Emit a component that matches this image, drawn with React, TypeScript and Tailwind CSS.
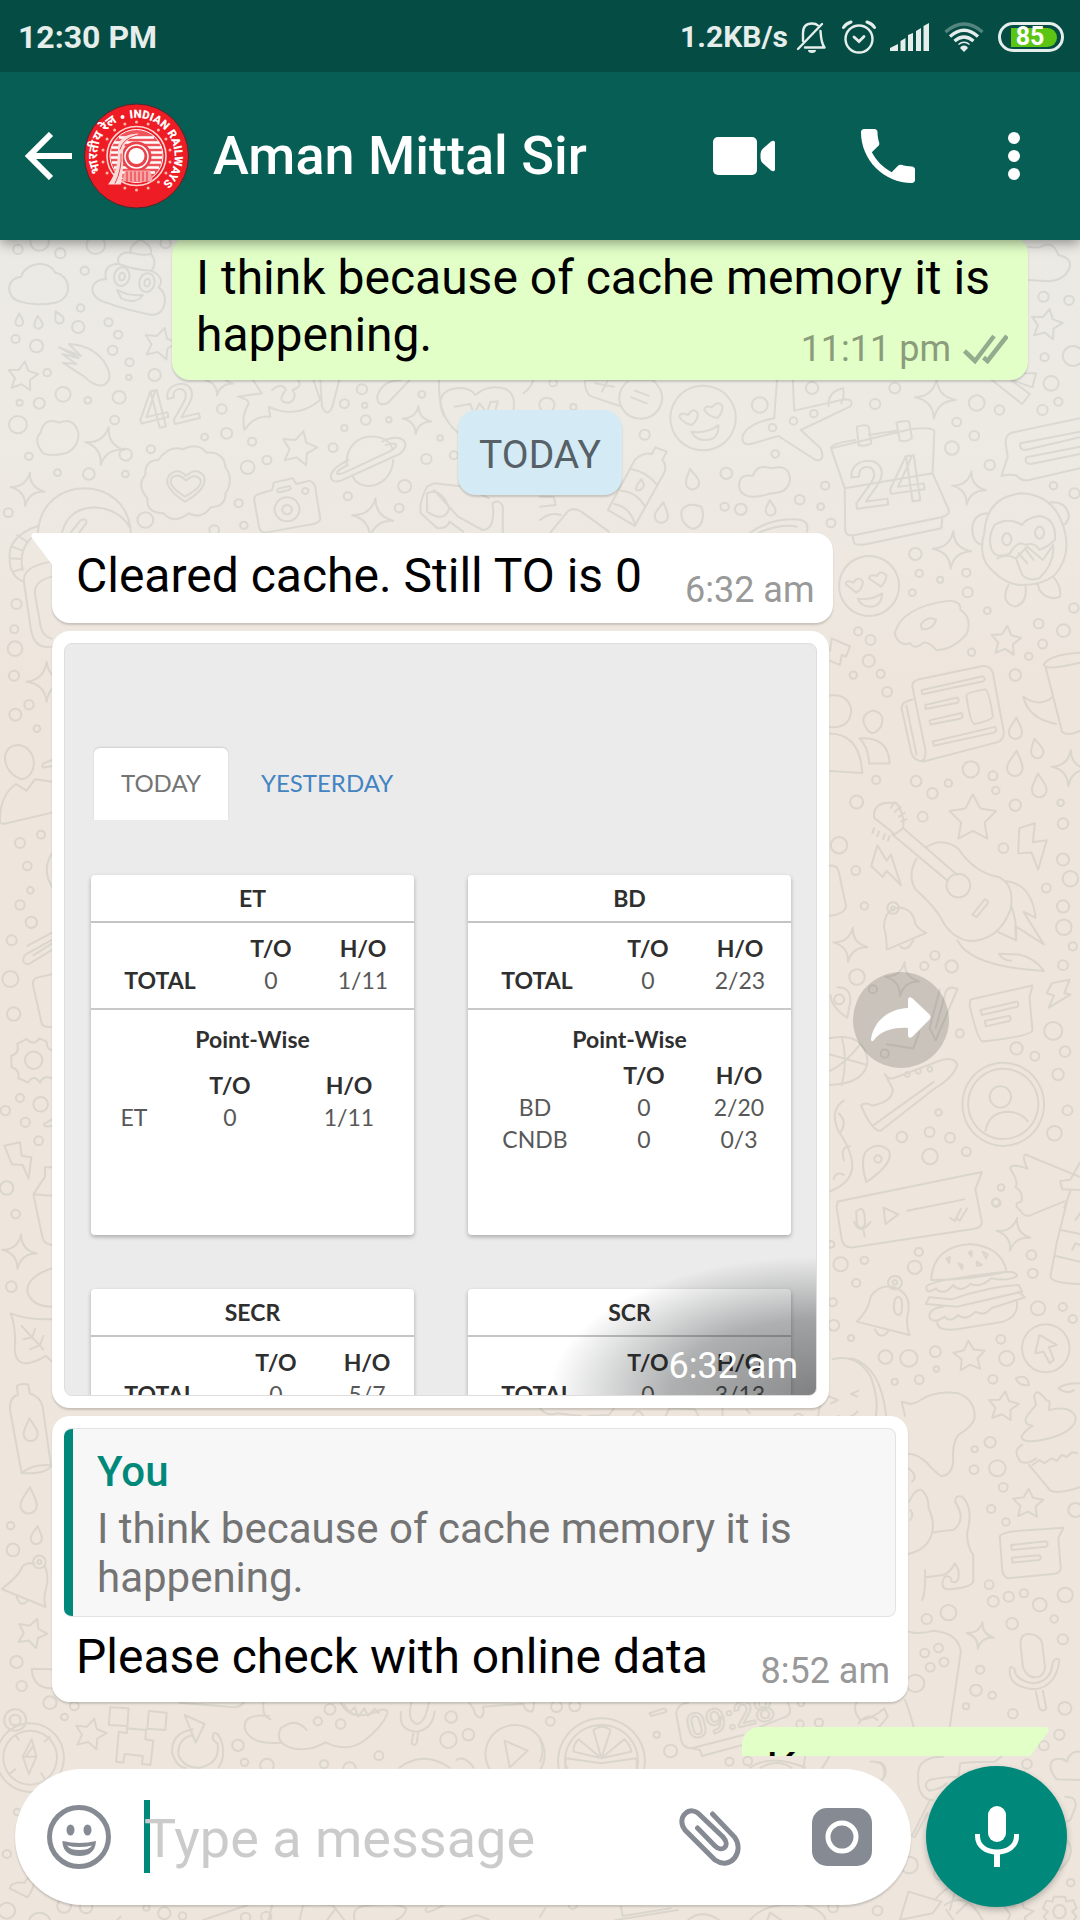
import React from "react";

/* ---------- Wallpaper ---------- */

type Panel = {
  t: string;
  dots: number[][];
  stars?: number[][];
  sparks?: number[][];
  drops?: number[][];
  paths?: string[];
  labels?: [string, number, number, number, number][];
};

const STAR = "M0-1 L.3-.42 .95-.31 .48.15 .59.81 0 .5 -.59.81 -.48.15 -.95-.31 -.3-.42Z";
const SPARK = "M0-1 Q.1-.12 1 0 Q.12.1 0 1 Q-.1.12 -1 0 Q-.12-.1 0-1Z";
const DROP = "M0-1 C.25-.45 .6-.1 .6.35 A.6.6 0 0 1-.6.35 C-.6-.1-.25-.45 0-1Z";

const panels: Panel[] = [
  {
    t: "translate(0 230) scale(.3444 .3333)",
    dots: [[52, 58, 14], [115, 35, 27], [175, 70, 15], [278, 45, 27], [246, 122, 12], [234, 234, 11], [315, 277, 12], [227, 291, 18], [343, 314, 12], [45, 327, 12], [106, 348, 19], [327, 361, 14], [376, 397, 12], [374, 442, 8], [137, 428, 11], [449, 435, 18], [183, 493, 22], [346, 502, 19], [57, 518, 9], [114, 520, 16], [255, 511, 10], [52, 584, 26], [333, 570, 13], [644, 537, 14], [594, 621, 10], [658, 610, 16], [438, 658, 12], [365, 674, 18], [84, 679, 11], [732, 635, 12], [167, 728, 10], [258, 732, 17], [364, 732, 10], [719, 712, 20], [775, 690, 13], [24, 848, 13], [422, 870, 23], [693, 820, 12], [708, 886, 11], [967, 653, 13], [1062, 570, 14], [1000, 521, 13], [1059, 526, 8], [1051, 478, 15], [1129, 569, 8], [1000, 594, 9], [1225, 493, 10], [1278, 624, 8], [1238, 687, 15], [1318, 676, 12], [1175, 769, 19], [1010, 799, 12], [1159, 834, 13], [48, 1122, 15], [481, 40, 15], [622, 900, 14]],
    stars: [[465, 342, 50, 15], [66, 440, 46, 8], [868, 656, 54, 14]],
    sparks: [[304, 648, 58, 12], [80, 778, 50, 8], [1211, 570, 42, 6], [1082, 864, 60, 8], [636, 455, 42, 8]],
    drops: [[56, 270, 19, 0], [111, 277, 20, -5], [170, 262, 20, -25]],
    labels: [["42", 412, 606, 158, -14]],
    paths: [
      "M60 215 C15 205 15 145 62 140 C70 100 140 85 160 128 C205 135 215 205 160 218 C125 226 85 224 60 215Z",
      "M300 215 C250 195 265 145 308 148 C300 115 320 100 345 102 C335 75 360 65 380 68 C375 45 395 40 405 28 C440 45 440 60 438 72 C455 90 448 110 440 122 C475 140 470 160 460 172 C490 190 485 255 440 255 C390 245 340 230 300 215Z",
      "M340 180 Q375 200 415 195 Q395 225 352 205Z M380 68 Q410 78 438 72 M345 102 Q390 120 440 122 M355 112 a22 28 10 1 0 1 0Z M428 130 a22 28 10 1 0 1 0Z M355 128 a8 12 10 1 0 1 0Z M428 146 a8 12 10 1 0 1 0Z",
      "M172 352 L235 378 L200 342 Q265 345 300 392 Q335 445 302 465 Q275 472 245 440 L182 398 L222 402 L180 372 L228 384Z",
      "M125 670 Q95 630 118 608 Q128 560 172 578 Q215 560 228 610 Q228 655 190 670 Q150 680 125 670Z",
      "M460 690 Q490 645 530 658 Q575 635 600 668 Q650 665 655 712 Q680 750 655 790 Q655 830 612 832 Q585 870 548 850 Q505 885 475 850 Q425 850 428 805 Q395 765 422 735 Q420 690 460 690Z",
      "M537 815 Q470 770 490 738 Q515 710 540 738 Q570 710 592 738 Q605 775 537 815Z M537 800 Q482 765 500 742 Q520 728 540 752 Q565 728 582 748 Q590 770 537 800Z",
      "M1007 705 C1000 600 1130 600 1140 660 M1142 690 C1135 780 1040 785 1025 740 M1012 690 C940 725 955 765 990 752 L1160 672 C1200 640 1165 605 1110 635 M1010 705 C970 725 970 740 1000 728 L1130 665 C1165 645 1150 635 1120 645",
      "M752 792 L790 780 L795 758 L850 745 L860 762 L900 752 Q918 760 918 790 L930 865 Q930 880 900 884 L770 908 Q755 908 752 890 L738 810 Q738 795 752 792Z M833 802 a36 36 0 1 0 1 0Z M833 825 a14 14 0 1 0 1 0Z M808 776 L840 768 Q850 775 838 780 L812 787 Q800 785 808 776Z M886 774 a9 9 0 1 0 1 0Z",
      "M110 908 C120 730 370 730 380 908 M180 908 C205 800 340 820 375 890 M205 908 L235 870 Q255 865 250 880 L230 908",
      "M110 888 Q20 920 28 990 Q30 1040 68 1055 M90 925 Q55 960 65 1020 M50 915 l30 22 M35 950 l30 12 M30 985 l32 2 M40 1025 l28 -10 M150 995 Q60 1010 70 1060 L90 1200 Q100 1258 150 1250 M150 1040 Q95 1055 102 1095 L118 1190 Q125 1220 150 1226",
      "M690 500 L760 490 L735 450 M690 500 Q730 510 720 525 Q700 560 710 600 Q740 555 785 560 L780 530 Q860 570 930 510 L910 450 M790 480 Q820 455 830 480 Q800 520 840 518 Q865 505 850 480 Q880 470 865 450 M930 450 L935 530 Q950 565 965 530 L985 450",
      "M1275 450 Q1270 560 1330 608 M1290 560 Q1260 495 1310 478 Q1360 465 1380 495 Q1420 460 1470 478 Q1500 495 1490 545 M1320 530 l45 -8 l12 30 l15 -32 l22 28 l10 -32 l22 -2 l-10 35 M1520 490 Q1545 470 1548 450 M1165 450 Q1110 450 1095 500 Q1095 530 1125 520 L1190 450",
      "M1240 770 L1260 760 L1350 770 L1420 805 M1240 770 Q1215 820 1222 850 L1270 895 Q1300 895 1305 875 L1345 905 M1240 790 Q1280 770 1305 835 Q1290 880 1240 845Z M1260 780 L1330 860 L1400 900 Q1440 900 1430 820 Q1450 805 1460 830 L1460 908",
    ],
  },
  {
    t: "translate(540 230) scale(.3444 .3333)",
    dots: [[1462, 200, 15], [1536, 211, 14], [1465, 382, 12], [1548, 378, 30], [1484, 460, 22], [1505, 515, 12], [1459, 540, 15], [1334, 540, 14], [1268, 519, 23], [1030, 474, 16], [973, 522, 15], [638, 525, 23], [790, 474, 18], [795, 551, 11], [736, 573, 11], [675, 593, 11], [304, 614, 15], [541, 730, 17], [683, 672, 11], [754, 809, 14], [828, 767, 12], [583, 838, 17], [536, 830, 12], [815, 830, 10], [845, 879, 13], [1210, 576, 13], [1261, 617, 14], [1196, 654, 20], [1306, 705, 15], [1491, 767, 11], [1552, 790, 15], [1090, 972, 18], [1101, 1030, 11], [1162, 1049, 9], [1238, 1028, 12], [1081, 1088, 10], [1242, 1087, 15], [1299, 1142, 10], [1550, 1134, 14], [1448, 1181, 14], [1520, 1202, 19], [38, 458, 11], [97, 531, 9], [20, 525, 22]],
    stars: [[1470, 284, 48, 12]],
    sparks: [[1148, 506, 60, 4], [1246, 774, 50, 8], [1196, 960, 56, 4]],
    drops: [[441, 748, 32, -10], [354, 848, 32, 8], [669, 834, 24, -5]],
    labels: [["24", 910, 838, 192, -8]],
    paths: [
      "M1418 50 Q1450 55 1455 50 Q1490 30 1505 75 Q1550 85 1535 120 Q1520 150 1480 154 L1418 150",
      "M1312 450 L1400 522 L1422 492 L1370 452 M1370 450 L1430 472 L1440 430 L1400 430",
      "M473 467 a95 97 0 1 0 1 0Z M405 560 Q405 545 430 555 Q445 530 458 550 Q460 570 440 585 Q415 580 405 560Z M477 540 Q480 525 500 532 Q515 510 530 528 Q530 550 515 564 Q490 560 477 540Z M440 605 Q485 612 518 586 Q520 630 480 630 Q450 630 440 605Z",
      "M955 978 a87 90 0 1 0 1 0Z M888 1063 Q888 1048 910 1058 Q925 1035 938 1055 Q935 1080 918 1088Z M955 1045 Q958 1032 978 1038 Q990 1018 1006 1036 Q1005 1055 990 1070Z M923 1106 Q960 1112 994 1090 Q990 1130 960 1130 Q932 1130 923 1106Z",
      "M688 450 L680 565 Q600 580 588 620 Q585 650 620 640 L692 618 L800 690 Q830 695 815 655 L757 600 L900 530 Q915 510 885 508 L738 542 L734 450 M838 528 Q835 485 880 475 Q885 500 875 520",
      "M335 450 L130 450 Q130 490 150 500 L232 528 M292 442 a62 62 0 1 0 1 0Z M275 482 l40 15 M265 502 l45 18 M160 460 l55 10 M180 485 l20 -40",
      "M335 652 L368 665 L355 690 Q370 705 360 730 L275 888 L197 840 L275 690 Q300 665 325 672Z M265 718 Q310 725 340 765 M235 782 Q280 785 305 830 M215 822 Q260 830 275 880 M295 748 Q275 770 280 780 Q295 785 302 765Z",
      "M412 840 Q430 815 468 830 Q480 860 465 885 Q445 905 430 890 Q405 870 412 840Z",
      "M580 780 Q570 730 618 738 Q630 700 672 715 Q725 700 726 750 Q720 790 670 790 Q600 815 580 780Z",
      "M845 655 Q845 640 915 630 M955 615 L1035 602 M1078 597 Q1145 590 1145 605 L1140 730 L1187 840 Q1190 855 1165 862 L915 915 Q888 920 886 900 L885 775 Q860 700 845 655Z M885 775 L1140 730 M908 920 L912 940 Q920 948 950 942 L1165 895 L1168 868 M920 590 Q950 580 955 592 L962 640 Q940 652 925 645Z M1035 578 Q1060 570 1072 575 L1080 625 Q1065 638 1045 632Z",
      "M1568 565 L1370 608 Q1350 615 1352 640 L1358 680 L1340 738 Q1370 730 1385 738 Q1400 755 1420 750 L1568 715 M1568 605 L1395 640 Q1390 660 1410 660 L1568 622 M1568 650 L1412 682 Q1405 702 1425 702 L1568 672",
      "M1398 790 Q1295 800 1290 910 Q1275 960 1295 1000 Q1345 1065 1400 1065 Q1460 1065 1495 1035 Q1540 980 1525 910 Q1500 795 1398 790Z M1305 850 Q1255 850 1255 900 Q1258 940 1285 945 M1475 818 Q1530 810 1536 860 Q1530 880 1520 885 M1400 885 Q1360 860 1320 885 Q1300 920 1310 955 Q1320 990 1365 970 Q1385 930 1410 945 Q1435 935 1450 960 Q1475 950 1495 930 Q1500 865 1450 858 Q1410 865 1400 885Z M1355 910 a13 18 0 1 0 1 0Z M1450 890 a13 18 0 1 0 1 0Z M1328 985 Q1355 970 1382 985 M1382 985 L1415 950 L1460 990 L1490 945 Q1495 1000 1450 1045 Q1420 1055 1400 1035 L1382 985 M1408 955 l25 35 M1390 970 l25 30 M1360 1065 Q1335 1120 1380 1130 Q1415 1120 1410 1070 M1490 1040 Q1515 1070 1510 1100 Q1475 1115 1450 1080 L1445 1060",
      "M610 908 Q660 870 730 868 Q785 865 775 905 M635 908 Q700 880 745 890",
      "M1030 1210 Q1050 1130 1190 1112 Q1225 1115 1220 1140 Q1255 1160 1240 1210 Q1200 1260 1150 1260 Q1120 1225 1105 1245 Q1085 1258 1075 1240 Q1040 1250 1030 1210Z M1105 1185 Q1125 1155 1150 1170 Q1140 1200 1110 1198Z",
      "M0 800 L40 800 L45 825 L0 830 M30 908 L80 845 Q95 830 120 845 L200 905 M0 870 Q30 845 60 855",
    ],
  },
  {
    t: "translate(440 620) scale(.408)",
    dots: [[1025, 28, 10], [1055, 49, 12], [1051, 100, 15], [1013, 135, 9], [1080, 132, 10], [1096, 176, 12], [1303, 79, 9], [1443, 89, 9], [1477, 59, 11], [1410, 135, 14], [1301, 366, 20], [1355, 382, 11], [1362, 418, 9], [1410, 454, 14], [1069, 392, 10], [1167, 395, 13], [1246, 400, 9], [1207, 425, 13], [1021, 446, 16], [1183, 482, 12], [1521, 448, 8], [1527, 499, 13], [978, 552, 20], [1381, 559, 12], [1019, 614, 11], [1527, 587, 15], [1545, 634, 19], [1486, 657, 11], [1527, 702, 15], [1529, 753, 19], [1551, 800, 10], [1527, 846, 12], [1040, 701, 9], [1213, 822, 11], [1187, 848, 10], [1254, 849, 15], [1022, 875, 19], [1061, 905, 10], [1090, 1063, 10], [1274, 1013, 10], [1503, 1007, 22], [1413, 1050, 15], [1458, 1069, 11], [1532, 1058, 13], [1515, 1114, 14], [1222, 1207, 8], [1200, 1255, 12], [1132, 1267, 13], [1250, 1269, 12], [1201, 1315, 19], [1290, 1303, 11], [1538, 1202, 12], [1506, 1258, 18], [1375, 1391, 8], [1362, 1427, 9]],
    stars: [[1387, 52, 38, 6], [1306, 487, 60, 0]],
    sparks: [[1543, 363, 44, 4], [1006, 796, 42, 8], [1133, 880, 42, 8]],
    drops: [[1411, 266, 27, 4], [1462, 315, 25, -12], [1410, 352, 32, 6], [1468, 406, 30, -4]],
    paths: [
      "M956 75 L960 45 L1005 65 L995 90 L985 85 L980 110 L956 100",
      "M1158 165 Q1155 150 1175 145 L1330 113 Q1350 112 1355 130 L1382 275 Q1382 295 1365 300 L1185 347 Q1160 345 1155 325 L1131 215 Q1132 200 1158 195 M1158 165 L1190 320 Q1190 345 1180 345 M1143 210 L1168 330 M1180 172 L1330 138 Q1340 145 1332 150 L1182 182Z M1190 208 L1268 190 Q1275 198 1268 203 L1190 218Z M1200 246 L1278 228 Q1285 238 1275 242 L1202 256Z M1208 298 L1360 262 Q1368 272 1358 276 L1210 308Z M1290 185 Q1290 178 1335 170 Q1345 170 1355 235 Q1355 245 1310 255 Q1300 255 1290 185Z",
      "M955 262 Q1005 268 1008 220 Q1000 180 956 185 M956 278 Q1030 280 1035 375 L956 370 M1059 222 Q1095 228 1080 262 Q1060 290 1045 265 Q1025 235 1059 222Z M1028 290 Q1100 285 1102 352 L1052 352 Q1050 310 1028 290Z",
      "M1568 80 Q1490 85 1480 110 Q1485 125 1568 105 M1485 118 L1525 275 Q1540 285 1568 272 M1430 188 Q1470 215 1500 190 M1430 188 Q1440 240 1510 255",
      "M1120 450 Q1060 440 1064 485 L1115 525 L1135 510 Q1140 480 1120 450Z M1108 525 L1245 640 M1135 510 L1268 625 M1270 622 a29 29 0 1 0 1 0Z M1190 558 Q1230 530 1270 560 Q1310 620 1370 630 Q1410 650 1398 710 Q1370 785 1300 787 Q1250 780 1225 725 Q1200 690 1165 660 Q1145 625 1168 585 M1305 722 L1335 685 Q1345 685 1342 695 L1315 728Z M1268 785 Q1300 850 1480 860 Q1460 830 1420 820 L1370 818 Q1380 835 1400 835 M1385 640 Q1450 645 1460 730 L1430 715 L1480 795 L1410 750 L1412 785 L1368 765 M1400 700 Q1415 740 1412 785",
      "M1105 460 l10 -14 M1115 470 l14 -12 M1125 482 l14 -10 M1130 494 l14 -6 M1064 510 l-4 12 M1076 518 l-4 12 M1090 525 l-4 12 M1102 530 l-4 10",
      "M1072 552 L1095 590 L1105 575 L1130 650 L1095 615 L1085 630 L1057 603Z M1420 510 L1458 498 L1453 545 L1487 540 L1466 612 L1450 570 L1417 572Z",
      "M1095 808 Q1095 775 1088 752 Q1090 705 1130 705 Q1160 710 1165 745 Q1175 760 1192 767Z M1110 692 a14 14 0 1 0 1 0Z M1110 702 a5 5 0 1 0 1 0Z M1128 800 Q1145 815 1160 785",
      "M955 602 Q975 600 978 620 L995 700 Q995 720 956 725",
      "M1300 930 L1452 896 L1445 925 L1452 1005 Q1450 1020 1330 1033 Q1318 1030 1298 945Z M1325 956 L1415 935 Q1420 942 1415 948 L1328 968Z M1335 983 L1395 970 Q1402 978 1395 983 L1338 996Z",
      "M1500 890 L1543 882 L1530 915 L1545 918 L1492 950 L1505 920 L1487 915Z",
      "M975 900 Q1010 900 1005 940 L998 975 Q960 950 957 920 M978 918 a12 12 0 1 0 1 0Z M955 1025 Q1040 1010 1048 1080 Q1045 1135 956 1140 M956 1065 L1045 1090 M985 1022 Q1000 1080 985 1140 M1030 1040 Q990 1090 956 1105",
      "M1095 1040 L1160 1050 L1175 1010 M1225 905 L1200 1000 L1215 1030 L1268 905 Q1250 895 1240 910 L1215 1000",
      "M1090 1112 Q1100 1130 1120 1120 L1225 1080 Q1260 1068 1268 1090 Q1260 1120 1210 1150 L1080 1252 Q1060 1255 1032 1190 Q1040 1180 1060 1190 Q1110 1180 1110 1150Z M1060 1240 L1210 1132 M1145 1108 a6 6 0 1 0 1 0Z M1172 1100 a6 6 0 1 0 1 0Z M1200 1095 a6 6 0 1 0 1 0Z",
      "M1380 1085 a100 102 0 1 0 1 0Z M1380 1100 a86 86 0 1 0 1 0Z M1373 1143 a26 26 0 1 0 1 0Z M1337 1252 Q1345 1205 1395 1205 Q1425 1208 1440 1228",
      "M1045 1378 Q1030 1330 1042 1305 Q1070 1275 1100 1300 Q1115 1330 1045 1378Z M1073 1312 a9 9 0 1 0 1 0Z",
      "M990 1178 Q955 1200 975 1250 Q1030 1330 1000 1370 Q985 1390 956 1400 M978 1210 Q1000 1230 980 1258 M1005 1290 Q980 1290 990 1325 M965 1370 Q970 1350 990 1360",
      "M975 1425 L1328 1353 L1312 1395 L1328 1475 Q1328 1490 1310 1492 L1010 1538 Q990 1538 985 1520 L972 1440Z M1145 1448 L1285 1420 M1087 1440 L1123 1457 L1092 1480Z M1020 1450 Q1035 1435 1040 1455 L1042 1480 Q1032 1500 1022 1480Z M1015 1475 Q1030 1510 1055 1475 M1038 1496 l3 15 M1250 1465 l12 8 l15 -30 M1268 1468 l6 4 l18 -30",
      "M1568 1365 L1435 1310 Q1425 1315 1440 1345 Q1395 1330 1398 1345 Q1420 1380 1410 1390 Q1430 1400 1425 1425 Q1400 1430 1425 1450 Q1430 1462 1445 1460 L1530 1425 M1568 1330 L1545 1372 L1520 1375 L1525 1395 L1568 1397 M1545 1400 L1530 1440",
    ],
  },
  {
    t: "translate(540 1200) scale(.3444 .3333)",
    dots: [[1325, 9, 12], [1100, 156, 12], [1088, 202, 20], [942, 181, 11], [873, 193, 21], [918, 249, 12], [850, 307, 12], [853, 376, 16], [903, 414, 9], [845, 133, 10], [1427, 165, 14], [1431, 220, 14], [1446, 325, 21], [1518, 321, 12], [1547, 357, 12], [1003, 471, 20], [1071, 475, 25], [1148, 455, 16], [1151, 507, 8], [1101, 539, 13], [1030, 545, 9], [1338, 418, 13], [1355, 475, 22], [1315, 538, 13], [1307, 727, 16], [1262, 748, 9], [1260, 809, 13], [1328, 805, 24], [1345, 862, 13], [1310, 927, 12], [1353, 966, 11], [1555, 930, 21], [750, 655, 14]],
    stars: [[1247, 470, 48, -4], [1345, 620, 46, 8], [1417, 912, 46, 2]],
    sparks: [[1375, 103, 50, 12]],
    paths: [
      "M1136 240 Q1140 140 1250 132 Q1340 140 1355 215 Q1250 240 1136 240Z M1122 260 Q1130 240 1355 215 Q1385 215 1385 228 Q1360 245 1310 235 Q1280 265 1250 252 Q1220 280 1200 255 Q1170 290 1150 265 Q1120 285 1122 260Z M1130 292 L1195 298 Q1300 260 1390 255 L1400 275 L1210 320 L1120 312Z M1390 275 L1408 292 L1310 325 Q1290 350 1265 335 Q1235 365 1215 345 Q1190 370 1175 350 Q1140 375 1130 350 Q1130 325 1170 320 M1155 360 Q1145 395 1210 388 L1345 365 Q1390 350 1385 305",
      "M1180 175 l10 -4 l-2 18Z M1215 190 l12 5 l-2 12Z M1245 158 l8 -5 l0 16Z M1285 155 l15 8 l-5 12Z M1268 185 l15 10 l-15 2Z",
      "M920 365 Q955 330 960 290 Q985 250 1030 262 Q1075 280 1070 330 Q1060 370 1073 405Z M1030 228 a20 20 0 1 0 1 0Z M1030 240 a7 7 0 1 0 1 0Z M972 388 Q990 425 1012 392 M1030 300 Q1040 280 1050 300 Q1055 345 1040 345 Q1022 340 1030 300Z",
      "M1468 373 a69 72 0 1 0 1 0Z M1450 405 L1500 435 L1478 442 L1492 480 L1480 490 L1462 455 L1438 460Z",
      "M1568 550 Q1520 550 1505 565 Q1535 585 1550 570 M1382 535 Q1415 520 1420 555 Q1390 560 1382 535Z",
      "M1420 640 L1440 615 L1435 590 Q1440 560 1470 600 L1480 605 L1478 630 Q1540 615 1555 650 Q1560 690 1480 715 Q1400 735 1398 710 Q1410 690 1430 678 Q1395 670 1420 640Z M1400 735 Q1370 750 1395 785 Q1420 795 1440 775 M1420 795 L1480 870 Q1500 885 1568 862 M1430 795 l20 -15 l15 10 l20 -15 l15 8 l15 -18 l15 6 l15 -14 l15 3",
      "M850 478 Q920 460 960 530 Q985 600 975 648 M905 475 Q990 500 1005 648 M808 648 Q810 600 840 590 L865 600 L845 610 M925 572 l-22 10 l18 8 M865 648 Q900 660 922 635",
      "M1060 648 L1050 605 L1075 612 Q1095 608 1105 600 Q1150 570 1215 580 Q1265 600 1262 655 Q1255 680 1215 705 Q1195 730 1200 790 Q1190 830 1165 828 Q1145 815 1125 790 Q1095 760 1070 762 M1070 805 Q1100 830 1080 845",
      "M1072 905 Q1090 865 1108 870 Q1130 890 1128 925 Q1150 970 1135 1010 Q1120 1050 1070 1062 M1140 998 Q1180 990 1200 990 Q1240 960 1205 905 Q1205 885 1225 890 Q1260 920 1240 1000 Q1240 1040 1258 1065 L1258 1145 Q1250 1165 1180 1168 Q1160 1160 1175 1130 Q1195 1125 1195 1145 Q1220 1155 1215 1110 L1205 1090 Q1190 1120 1170 1125 L1120 1132 M1118 1110 Q1120 1180 1110 1200 M1075 930 q12 12 0 30",
      "M1335 1010 Q1335 1000 1380 993 L1520 983 L1505 1015 L1512 1105 Q1510 1120 1490 1122 L1360 1135 Q1345 1132 1342 1110Z M1368 1035 L1470 1024 Q1478 1032 1470 1040 L1370 1050Z M1370 1073 L1450 1066 Q1458 1073 1450 1080 L1372 1088Z",
      "M1530 5 L1500 130 L1482 230 Q1485 250 1568 252 M1513 90 L1568 102 M1497 168 L1568 185 M1555 60 l13 -20 M1545 150 l10 -20 l13 5",
      "M0 625 Q20 650 50 640 L120 648 M140 648 L200 645 L215 625 M270 648 Q285 620 300 648 M365 648 L375 625 L450 628 L460 648 M530 625 L530 648 M600 630 L610 640",
    ],
  },
  {
    t: "translate(0 1580) scale(.3444 .3333)",
    dots: [[48, 246, 18], [63, 318, 15], [145, 368, 19], [216, 378, 13], [187, 411, 10], [44, 420, 32], [44, 420, 16], [691, 496, 17], [710, 547, 11], [775, 556, 20], [923, 424, 12], [958, 388, 16], [989, 432, 14], [941, 553, 12], [1100, 527, 13], [1310, 411, 17], [1302, 480, 24], [1360, 464, 17], [1015, 565, 18], [20, 822, 12], [20, 992, 24], [186, 978, 20], [250, 982, 18], [477, 1000, 18], [530, 1008, 11], [713, 1012, 14], [773, 1010, 15], [115, 1030, 32], [50, 696, 10], [425, 983, 9]],
    stars: [[92, 160, 46, 20], [262, 463, 48, 14]],
    paths: [
      "M87 430 a98 103 0 1 0 1 0Z M87 452 a78 81 0 1 0 1 0Z M92 478 L106 530 L84 582 L66 530Z M66 530 L106 530 M78 525 L95 500 M45 465 l10 15 M130 485 l14 -15 M28 582 l16 -14 M120 580 l10 18",
      "M320 382 L373 385 L370 438 L316 435Z M432 393 L484 398 L480 450 L428 446Z M370 438 L368 445 L422 450 L428 446 M345 455 L368 460 L370 445 M345 455 L337 545 L358 548 L362 522 L415 528 L412 552 L437 555 L445 482 L422 478 L424 450",
      "M560 448 Q495 460 500 520 Q515 565 540 563 M560 465 Q515 475 518 525 Q535 565 580 563 Q640 550 632 490 Q612 480 620 460 Q635 455 645 490 Q655 530 635 563 M536 405 L594 432 L568 488 L552 445Z",
      "M765 368 Q760 410 785 418 M780 408 Q700 400 712 450 Q730 495 815 488 M890 450 Q860 410 815 445 Q795 490 850 505 Q900 515 945 487 Q1010 520 1060 480 Q1110 440 1125 400 Q1125 385 1105 390 Q1020 430 990 370 M1000 375 l15 22 l15 -15 l10 28 l18 -25 l10 22 l20 -20 l12 12 M520 368 L680 382 Q700 380 708 368",
      "M1195 368 Q1180 420 1210 432 Q1235 430 1245 368 M1165 395 Q1155 450 1208 455 Q1255 450 1262 395 M1200 460 L1195 490 Q1205 500 1210 488 L1214 460",
      "M1362 368 L1375 385 Q1380 415 1398 412 Q1408 400 1402 380 L1520 372 Q1525 395 1545 395 Q1552 385 1550 368",
      "M1495 435 a86 88 0 1 0 1 0Z M1465 482 L1532 512 L1480 563Z M1160 563 Q1230 510 1305 563 M1325 540 Q1350 525 1375 563",
      "M150 268 L92 266 Q95 325 150 325",
      "M95 890 Q75 895 72 908 Q30 905 28 925 L80 952 Q95 930 98 912",
      "M590 1020 L720 975 M780 1020 L790 975 M870 1020 L880 975 Q900 970 965 975 L1000 1020 M950 1020 L975 985 M1030 1020 Q1020 985 1055 978 Q1150 965 1180 985 Q1175 1010 1150 1020 M1238 985 Q1230 1005 1260 990 L1290 975 M1340 1020 L1385 1005 L1420 1020 M340 1020 L350 1010",
    ],
  },
  {
    t: "translate(540 1580) scale(.3444 .3333)",
    dots: [[1304, 14, 13], [1405, 40, 12], [1316, 64, 16], [1361, 50, 15], [1525, 45, 22], [1451, 74, 20], [1186, 98, 23], [1123, 117, 15], [1493, 117, 11], [1371, 131, 17], [1518, 178, 15], [1117, 219, 13], [1157, 204, 13], [1173, 246, 13], [1133, 262, 13], [1090, 310, 26], [1278, 269, 12], [1266, 331, 17], [1313, 346, 11], [1237, 379, 9], [1373, 401, 14], [1524, 385, 19], [1508, 464, 15], [1463, 497, 14], [1414, 552, 14], [48, 380, 16], [101, 378, 16], [30, 424, 13], [339, 464, 9], [379, 513, 19], [550, 545, 12], [603, 543, 13], [755, 432, 11], [810, 428, 12], [758, 370, 9], [1072, 855, 25], [1541, 908, 11], [851, 983, 14], [980, 992, 14], [95, 975, 12]],
    stars: [[1388, 1000, 46, 10]],
    sparks: [[1278, 166, 40, 10]],
    labels: [["09:28", 435, 478, 102, -14]],
    paths: [
      "M1070 155 Q1100 165 1145 152 Q1215 160 1222 215 L1190 440 M985 440 L1010 410 L1000 385 Q960 420 930 420 Q905 390 920 365 M1060 360 Q1075 400 1085 440 M925 430 Q950 395 980 420",
      "M1415 162 Q1395 165 1395 190 L1402 260 Q1415 300 1450 290 Q1470 280 1465 250 L1458 190 Q1450 160 1415 162Z M1365 262 Q1355 320 1435 328 Q1500 320 1508 240 Q1495 230 1488 250 Q1485 305 1430 310 Q1380 300 1378 268 Q1370 258 1365 262Z M1440 335 L1450 385 Q1460 398 1470 385 L1460 332",
      "M178 415 a126 128 0 1 0 1 0Z M178 435 a106 108 0 1 0 1 0Z M178 535 L155 450 Q180 430 205 450Z M178 535 L112 478 Q95 495 98 515Z M178 535 L245 478 Q262 495 265 515Z M178 550 L75 535 Q72 560 80 563 M178 550 L280 535 Q282 555 280 563 M0 480 Q15 510 0 545",
      "M395 400 Q400 370 430 368 M395 400 L410 480 Q415 505 440 505 L590 465 M440 505 L465 510 L470 528 L588 495 M720 368 Q735 400 715 410 L640 440 M318 400 L360 385 Q375 392 360 398 L322 408Z",
      "M610 563 Q670 520 770 563 M640 563 Q690 535 730 563 M770 530 L765 563 M820 563 L840 530 M975 548 a22 28 0 1 1 -5 50 M960 545 Q1000 540 1000 580 Q995 610 980 610",
      "M1170 530 Q1100 530 1098 580 L1098 610 Q1105 660 1140 660 M1340 530 L1320 545 Q1240 545 1220 550 L1215 590 Q1170 590 1130 600 Q1110 615 1130 632 Q1170 625 1180 610 M1130 665 L1080 768 L1088 772 L1125 700",
      "M1568 600 L1500 598 Q1470 560 1490 540 Q1515 530 1530 545 Q1540 510 1568 515 M1525 650 Q1560 650 1555 680 L1540 720 L1530 725 M1530 780 Q1560 820 1510 870 M1150 860 Q1135 890 1160 900",
      "M1070 935 L1165 965 L1140 1000 L1045 1020 M1070 935 L1045 1020 M1150 955 Q1190 910 1205 925 M1175 975 Q1240 930 1285 1020 M1190 990 L1205 935 M1210 1000 L1250 960 M1200 1020 L1180 990 M235 980 L240 1008 L380 985 M220 1020 L400 990 M0 1010 L15 985 M610 1020 Q650 970 740 975 M770 975 Q820 990 830 1020 M660 1020 L668 998 L700 1020 M430 1020 Q470 985 520 1020",
      "M1508 975 a18 20 0 1 0 1 0Z M1492 950 L1525 950 L1528 965 L1548 960 L1558 985 L1545 995 L1558 1010 L1550 1020 M1492 950 L1488 965 L1470 962 L1460 985 L1475 995 L1462 1010 L1470 1020",
    ],
  },
  {
    t: "translate(0 620) scale(.3333)",
    dots: [[43, 28, 12], [45, 86, 22], [42, 167, 15], [87, 254, 14], [46, 284, 18], [111, 326, 10], [123, 644, 12], [60, 669, 15], [82, 738, 13], [91, 811, 10], [60, 855, 14], [94, 907, 17], [35, 961, 15], [31, 1077, 24], [41, 1182, 20], [101, 1321, 26], [60, 1434, 12], [122, 1453, 22], [16, 1472, 14]],
    sparks: [[140, 185, 60, 0]],
    paths: [
      "M57 375 C-5 375 5 460 65 478 C115 470 115 385 57 375Z M156 485 L105 478 L80 512 L48 492 Q0 525 0 600 Q-2 615 20 610 L156 578",
      "M156 420 L130 430 Q122 445 135 442 L156 438 M156 700 Q125 750 156 800",
      "M156 938 L82 978 M156 960 L75 1005 Q60 1030 85 1033 L156 990 M156 970 L100 1006",
      "M156 1063 L110 1073 Q95 1080 100 1100 L125 1210 Q132 1225 156 1220",
      "M80 1257 Q100 1280 118 1255 L140 1265 Q140 1290 156 1290 M156 1375 Q130 1365 120 1388 Q100 1360 85 1388 L55 1375 Q60 1350 35 1342 L33 1308 Q60 1300 52 1272 L80 1257",
    ],
  },
  {
    t: "translate(0 1110) scale(.3333)",
    dots: [[76, 37, 14], [116, 92, 13], [20, 234, 20], [47, 312, 13], [34, 530, 16], [32, 1247, 11], [39, 1320, 19], [118, 1356, 19], [118, 1356, 6]],
    sparks: [[58, 425, 52, 6]],
    drops: [[91, 960, 35, -5], [87, 1172, 41, 4], [110, 1276, 28, 6]],
    paths: [
      "M13 107 L60 97 L65 137 L94 142 L86 206 L68 165 L36 163Z",
      "M156 172 L135 172 L135 200 L100 253 L156 257 M100 253 L128 385 Q132 402 156 405 M156 28 L132 42 Q130 52 156 48",
      "M156 475 Q80 500 82 545 Q95 590 156 590 M156 628 Q80 630 32 610 Q50 660 44 720 Q50 790 138 738 L156 755 M65 648 L130 718 M105 657 L97 682 L70 688 M130 678 L120 705 L90 718",
      "M50 828 Q65 818 85 824 L89 850 Q120 860 128 890 L153 1068 Q140 1092 65 1090 L30 900 Q28 860 54 855Z M65 1088 Q100 1062 153 1066",
      "M5 1437 Q60 1395 67 1370 Q80 1355 103 1362 M133 1366 Q150 1400 137 1440 Q130 1465 137 1491 L5 1437 M50 1460 Q60 1495 84 1472",
    ],
  },
];

function Wallpaper() {
  return (
    <svg
      aria-hidden="true"
      viewBox="0 0 1080 1920"
      preserveAspectRatio="xMidYMin slice"
      className="absolute inset-0 h-full w-full opacity-[0.14] [&_*]:[vector-effect:non-scaling-stroke]"
      fill="none"
      stroke="#6d7a70"
      strokeWidth="2"
      strokeLinejoin="round"
      strokeLinecap="round"
    >
      {panels.map((p, i) => (
        <g key={i} transform={p.t}>
          {p.dots.map(([x, y, r], k) => (
            <circle key={k} cx={x} cy={y} r={r} />
          ))}
          {p.stars?.map(([x, y, s, a], k) => (
            <path key={k} d={STAR} transform={`translate(${x} ${y}) rotate(${a}) scale(${s})`} />
          ))}
          {p.sparks?.map(([x, y, s, a], k) => (
            <path key={k} d={SPARK} transform={`translate(${x} ${y}) rotate(${a}) scale(${s})`} />
          ))}
          {p.drops?.map(([x, y, s, a], k) => (
            <path key={k} d={DROP} transform={`translate(${x} ${y}) rotate(${a}) scale(${s})`} />
          ))}
          {p.paths?.map((d, k) => (
            <path key={k} d={d} />
          ))}
          {p.labels?.map(([s, x, y, size, a]) => (
            <text key={s} transform={`translate(${x} ${y}) rotate(${a})`} fontSize={size} className="font-['Roboto',sans-serif] font-medium">
              {s}
            </text>
          ))}
        </g>
      ))}
    </svg>
  );
}

/* ---------- Status bar ---------- */

function StatusBar() {
  return (
    <div className="flex h-[72px] items-center justify-between bg-[#054d44] pt-0.5 pr-4 pl-[18px] text-[#e6eeec]">
      <span className="text-[32px] leading-9 font-bold">12:30 PM</span>
      <div className="flex items-center">
        <span className="mr-2 text-[30px] leading-9 font-bold">1.2KB/s</span>
        <svg width="30" height="32" viewBox="0 0 30 32" className="mr-4" fill="none" stroke="currentColor" strokeWidth="2.4" strokeLinecap="round">
          <path d="M2 28 L26 3" />
          <path d="M7 20 V12 C7 6 10 2.500 16 2.500 C18.500 2.500 20.500 3 22 4.500" />
          <path d="M24.500 10 C25 16 25 22 28.500 26.500 H9" strokeLinejoin="round" />
          <path d="M12 29 h8 a4 3 0 0 1-8 0Z" fill="currentColor" stroke="none" />
        </svg>
        <svg width="34" height="34" viewBox="0 0 34 34" className="mr-3.5" fill="none" stroke="currentColor" strokeWidth="2.4" strokeLinecap="round">
          <circle cx="17" cy="19" r="13.500" />
          <path d="M1.500 7.500 Q4 3.500 9 2" strokeWidth="3" />
          <path d="M32.500 7.500 Q30 3.500 25 2" strokeWidth="3" />
          <path d="M12 17 L17 21.500 L22 16.500" strokeWidth="2.8" />
        </svg>
        <svg width="39" height="28" viewBox="0 0 39 28" className="mr-[15px]" fill="currentColor">
          <path d="M0 28 V25 L8 21 V28Z M10.500 28 V18 L15.500 15 V28Z M18 28 V12 L23 10 V28Z M26 28 V8 L31 5 V28Z M33.500 28 V3 L39 0 V28Z" />
        </svg>
        <svg width="40" height="30" viewBox="0 0 40 30" className="mr-3.5" fill="none" stroke="currentColor" strokeWidth="3.200">
          <path d="M1.500 10 Q20-6 38.500 10" opacity=".35" />
          <path d="M6 14.500 Q20 2 34 14.500" />
          <path d="M10.500 19 Q20 11 29.500 19" />
          <path d="M16 26 A4.500 4.500 0 0 1 24 26 L20 30Z" fill="currentColor" stroke="none" />
          <path d="M14.500 22.500 Q20 18 25.500 22.500" strokeWidth="1.500" />
        </svg>
        <div className="flex h-[30px] w-[66px] items-center justify-end rounded-full border-[3px] border-current pr-1">
          <span className="flex h-[19px] w-[46px] items-center justify-center rounded-l-xs rounded-r-full bg-[#5cc514] pr-2 text-[25px] leading-6 font-bold text-white">
            85
          </span>
        </div>
      </div>
    </div>
  );
}

/* ---------- App bar ---------- */

function Avatar() {
  const dots = Array.from({ length: 18 }, (_, i) => {
    const a = (i * Math.PI) / 9;
    return [52.5 + 34 * Math.sin(a), 52.5 - 34 * Math.cos(a)];
  });
  return (
    <svg width="105" height="106" viewBox="0 0 105 105" role="img" aria-label="Contact photo" className="shrink-0">
      <defs>
        <path id="arc-right" d="M46 15 A38 38 0 0 1 70 86.200" />
        <path id="arc-left" d="M17 69 A39 39 0 0 1 36 17" />
      </defs>
      <circle cx="52.500" cy="52.500" r="52" fill="#ee1c25" stroke="#4a2a2c" strokeWidth="1" />
      <text fill="#fff" fontSize="11.500" className="font-['Roboto',sans-serif] font-black">
        <textPath href="#arc-right">INDIAN RAILWAYS</textPath>
      </text>
      <text fill="#fff" fontSize="13" className="font-['Noto_Sans_Devanagari','Noto_Sans',sans-serif] font-bold">
        <textPath href="#arc-left">भारतीय रेल</textPath>
      </text>
      <circle cx="38.500" cy="13.500" r="2" fill="#fff" />
      {dots.map(([x, y], i) => (
        <circle key={i} cx={x} cy={y} r="1.500" fill="#ffb9a8" />
      ))}
      <circle cx="52.500" cy="52.500" r="29.500" fill="#ee1c25" stroke="#fbd5d2" strokeWidth="1.600" />
      <circle cx="52.500" cy="52.500" r="26.500" fill="#f0545a" stroke="#fff" strokeWidth="1" />
      <path d="M35 34 H70 M30 39 H75 M28 44 H77 M27 49 H78 M27 54 H78 M28 59 H77 M30 64 H75 M34 69 H71" stroke="#fff" strokeWidth="2.400" />
      <circle cx="52.500" cy="53" r="15" fill="#e8434a" />
      <circle cx="52.500" cy="53" r="11.500" fill="none" stroke="#fff" strokeWidth="1.500" />
      <circle cx="52.500" cy="52.500" r="8" fill="#fff" />
      <path d="M41 67 H66 L69 78 H38Z" fill="#f6a5a6" />
      <path d="M43 68 V78 M47 68 V78 M51 68 V78 M55 68 V78 M59 68 V78 M63 68 V78" stroke="#ee3a42" strokeWidth="1.200" />
      <path d="M34 45 C34 34 45 30 55 30 C50 33 42 36 40 43 C37 55 41 62 37 81 H24 C30 73 34 64 34 45Z" fill="#fbdcda" />
      <path d="M36 46 Q39 35 52 32 M37 50 Q38 66 31 80" fill="none" stroke="#e8434a" strokeWidth="1" />
    </svg>
  );
}

function AppBar() {
  return (
    <header className="relative z-10 shrink-0 shadow-[0_3px_12px_rgba(0,0,0,0.4)]">
      <StatusBar />
      <div className="flex h-[168px] items-center bg-[#075e54] pr-10 text-white">
        <button aria-label="Back" className="ml-[25px] flex h-12 w-12 items-center">
          <svg width="48" height="48" viewBox="0 0 48 48" fill="none" stroke="currentColor" strokeWidth="6">
            <path d="M47 24 H5 M26 2 L4 24 L26 46" />
          </svg>
        </button>
        <div className="ml-[11px]">
          <Avatar />
        </div>
        <h1 className="ml-6 flex-1 text-[54px] leading-[64px] font-medium">Aman Mittal Sir</h1>
        <button aria-label="Video call" className="mr-[86px]">
          <svg width="62" height="38" viewBox="0 0 62 38" fill="currentColor">
            <rect width="44" height="38" rx="5" />
            <path d="M47.500 17 Q47.500 14 49.500 12 L58 4.500 Q62 2.500 62 6 V32 Q62 35.500 58 33.500 L49.500 26 Q47.500 24 47.500 21Z" />
          </svg>
        </button>
        <button aria-label="Voice call" className="mr-[93px]">
          <svg width="54" height="54" viewBox="3 3 18 18" fill="currentColor">
            <path d="M6.620 10.790c1.440 2.830 3.760 5.140 6.590 6.590l2.200-2.200c.27-.27.67-.36 1.020-.24 1.120.37 2.330.57 3.570.57.55 0 1 .45 1 1V20c0 .55-.45 1-1 1-9.390 0-17-7.610-17-17 0-.55.45-1 1-1h3.500c.55 0 1 .45 1 1 0 1.250.2 2.450.57 3.570.11.35.03.74-.25 1.020z" />
          </svg>
        </button>
        <button aria-label="More options" className="mr-5">
          <svg width="12" height="48" viewBox="0 0 12 48" fill="currentColor">
            <circle cx="6" cy="6" r="6" />
            <circle cx="6" cy="24" r="6" />
            <circle cx="6" cy="42" r="6" />
          </svg>
        </button>
      </div>
    </header>
  );
}

/* ---------- Messages ---------- */

const bubbleShadow = "shadow-[0_2px_2px_rgba(0,0,0,0.16)]";

function Ticks() {
  return (
    <svg width="45" height="30" viewBox="0 0 45 30" fill="none" stroke="#93ac8e" strokeWidth="4.500" role="img" aria-label="Delivered">
      <path d="M1.500 17 L12 27 L31 2" />
      <path d="M20.500 23.500 L24.500 27 L44 2" />
    </svg>
  );
}

type Col = [number, number, number];

function Figures({ cols, rows, bold }: { cols: Col; rows: string[][]; bold?: boolean }) {
  return (
    <table className="table-fixed border-collapse text-center leading-8">
      <colgroup>
        {cols.map((w, i) => (
          <col key={i} style={{ width: w }} />
        ))}
      </colgroup>
      <thead>
        <tr className="text-[#2f2f2f]">
          <td></td>
          <th className="font-bold">T/O</th>
          <th className="font-bold">H/O</th>
        </tr>
      </thead>
      <tbody className="text-[#585858]">
        {rows.map((r) => (
          <tr key={r[0]}>
            <th className={bold ? "font-bold text-[#2f2f2f]" : "font-normal"}>{r[0]}</th>
            <td>{r[1]}</td>
            <td>{r[2]}</td>
          </tr>
        ))}
      </tbody>
    </table>
  );
}

function StatCard({ title, totalCols, total, children }: { title: string; totalCols: Col; total: string; children?: React.ReactNode }) {
  return (
    <section className="h-[360px] rounded-sm bg-white shadow-[0_2px_4px_rgba(0,0,0,0.28)]">
      <h3 className="h-12 border-b-2 border-[#c4c4c4] text-center leading-[46px] font-bold text-[#2f2f2f]">{title}</h3>
      <div className="h-[87px] border-b-2 border-[#c9c9c9] pt-[9px] pl-[14px]">
        <Figures cols={totalCols} rows={[["TOTAL", "0", total]]} bold />
      </div>
      {children}
    </section>
  );
}

function SharedReport() {
  return (
    <div className="relative h-[753px] overflow-hidden rounded-lg border border-[#dedede] bg-[#ebebeb] pr-[25px] pl-[26px] font-['Lato',sans-serif] text-[23px]">
      <div className="mt-[104px] flex h-[72px] items-center pl-[3px] text-[24px]">
        <button className="h-full rounded-t-md bg-white px-[27px] pb-1 text-[#747474] shadow-[0_-1px_2px_rgba(0,0,0,0.12)]">TODAY</button>
        <button className="ml-[33px] pb-1 text-[#4384c2]">YESTERDAY</button>
      </div>
      <div className="mt-[55px] grid grid-cols-2 gap-x-[54px] gap-y-[54px]">
        <StatCard title="ET" totalCols={[110, 112, 72]} total="1/11">
          <h4 className="pt-[11px] text-center leading-9 font-bold text-[#2f2f2f]">Point-Wise</h4>
          <div className="pt-3 pl-5">
            <Figures cols={[46, 146, 92]} rows={[["ET", "0", "1/11"]]} />
          </div>
        </StatCard>
        <StatCard title="BD" totalCols={[110, 112, 72]} total="2/23">
          <h4 className="pt-[11px] text-center leading-9 font-bold text-[#2f2f2f]">Point-Wise</h4>
          <div className="pt-0.5 pl-[13px]">
            <Figures cols={[108, 110, 80]} rows={[["BD", "0", "2/20"], ["CNDB", "0", "0/3"]]} />
          </div>
        </StatCard>
        <StatCard title="SECR" totalCols={[110, 122, 60]} total="5/7" />
        <StatCard title="SCR" totalCols={[110, 112, 72]} total="3/13" />
      </div>
      <div className="absolute right-0 bottom-0 h-[140px] w-[270px] bg-[radial-gradient(ellipse_at_bottom_right,rgba(20,24,26,0.5)_0%,rgba(20,24,26,0.34)_38%,rgba(20,24,26,0)_70%)]"></div>
      <span className="absolute right-[18px] bottom-[9px] font-['Roboto',sans-serif] text-[36px] leading-10 text-white">6:32 am</span>
    </div>
  );
}

function Time({ children }: { children: React.ReactNode }) {
  return <span className="shrink-0 text-[36px] leading-10 whitespace-nowrap text-[#999999]">{children}</span>;
}

function Messages() {
  return (
    <main className="relative flex min-h-0 flex-1 flex-col items-start overflow-hidden px-[52px] text-[48px] leading-[57px] text-black">
      <div className={`-mt-1 flow-root max-w-[856px] self-end rounded-[18px] bg-[#e1ffc7] pt-[13px] pr-5 pb-[17px] pl-6 ${bubbleShadow}`}>
        I think because of cache memory it is happening.
        <span className="float-right mt-[23px] -mb-2 flex items-center gap-3 text-[36px] leading-10 text-[#8a9c7b]">
          11:11 pm
          <Ticks />
        </span>
      </div>

      <div className={`mt-[30px] self-center rounded-[18px] bg-[#d4eaf4] px-[21px] pt-[21px] pb-[15px] text-[39px] leading-[49px] text-[#566066] ${bubbleShadow}`}>
        TODAY
      </div>

      <div className={`relative mt-[38px] flex items-end gap-[43px] rounded-[18px] rounded-tl-none bg-white pt-3.5 pr-[19px] pb-[13px] pl-6 ${bubbleShadow}`}>
        <svg width="22" height="34" viewBox="0 0 22 34" className="absolute top-0 -left-[21px]" fill="#fff">
          <path d="M3 0 H22 V33 L1 5 Q-1 1 3 0Z" />
        </svg>
        <p className="mb-1.5">Cleared cache. Still TO is 0</p>
        <Time>6:32 am</Time>
      </div>

      <div className="mt-2 flex items-center gap-6">
        <div className={`w-[777px] rounded-[18px] bg-white p-3 ${bubbleShadow}`}>
          <SharedReport />
        </div>
        <button aria-label="Forward" className="flex h-24 w-24 items-center justify-center rounded-full bg-black/15 text-white">
          <svg width="60" height="46" viewBox="0 0 60 46" fill="currentColor">
            <path d="M37 2 Q38-1 41 1 L58 17 Q61 20 58 23 L41 40 Q37 42 37 38 V31 C22 30 10 34 3 43 Q0 46 0 42 C3 24 17 12 37 11Z" />
          </svg>
        </button>
      </div>

      <div className={`mt-2 rounded-[18px] bg-white p-3 pb-[11px] ${bubbleShadow}`}>
        <blockquote className="w-[832px] overflow-hidden rounded-lg border border-l-0 border-[#e3e3e3] bg-[#f7f7f7]">
          <div className="border-l-[9px] border-[#00897b] pt-[18px] pr-8 pb-3.5 pl-6 text-[42px] leading-[49px] text-[#747474]">
            <p className="mb-2 font-medium text-[#00897b]">You</p>
            <p>I think because of cache memory it is happening.</p>
          </div>
        </blockquote>
        <div className="flex items-end justify-between pt-[11px] pr-1.5 pl-3">
          <p className="mb-1.5">Please check with online data</p>
          <Time>8:52 am</Time>
        </div>
      </div>

      <div className="relative mt-[25px] w-[286px] self-end rounded-[18px] rounded-tr-none bg-[#e1ffc7] pt-3.5 pb-[18px] pl-6">
        <svg width="22" height="34" viewBox="0 0 22 34" className="absolute top-0 -right-[21px]" fill="#e1ffc7">
          <path d="M19 0 H0 V33 L21 5 Q23 1 19 0Z" />
        </svg>
        <p>K</p>
      </div>
    </main>
  );
}

/* ---------- Composer ---------- */

function Composer() {
  return (
    <footer className="relative flex shrink-0 items-center gap-[15px] pt-2.5 pr-[13px] pb-[13px] pl-[15px]">
      <div className={`flex h-[136px] min-w-0 flex-1 items-center rounded-full bg-white pr-[39px] pl-8 text-[#868b93] ${bubbleShadow}`}>
        <button aria-label="Emoji" className="shrink-0">
          <svg width="64" height="64" viewBox="0 0 64 64" fill="currentColor">
            <circle cx="32" cy="32" r="29.500" fill="none" stroke="currentColor" strokeWidth="5" />
            <ellipse cx="23.500" cy="25" rx="4" ry="5.500" />
            <ellipse cx="40.500" cy="25" rx="4" ry="5.500" />
            <path d="M16 36 Q32 40 49 36 Q48 51 32.500 51 Q17 51 15.500 38 Q15 36 16 36Z" />
            <path d="M20 40.500 Q32 43.500 45 40.500 Q42 45 32.500 45 Q23 45 20 40.500Z" fill="#fff" />
          </svg>
        </button>
        <div className="relative ml-[33px] min-w-0 flex-1">
          <span className="absolute top-0 left-0 h-[73px] w-1.5 bg-[#00897b]"></span>
          <input
            type="text"
            aria-label="Message"
            placeholder="Type a message"
            className="relative block h-[73px] w-full bg-transparent pt-1 text-[54px] text-black placeholder-[#cbcbcb] outline-none"
          />
        </div>
        <button aria-label="Attach" className="shrink-0">
          <svg width="62" height="58" viewBox="0 0 62 58" fill="none" stroke="currentColor" strokeWidth="5" strokeLinecap="round">
            <path d="M33.500 6 L55.500 29 C66 43 52 63 36 52 L6 22 C-4 9 12-4 21 7 L44 29 C52 38 43 45 36 38 L18.500 20" />
          </svg>
        </button>
        <button aria-label="Camera" className="ml-[71px] shrink-0">
          <svg width="60" height="58" viewBox="0 0 60 58">
            <rect width="60" height="58" rx="15" fill="currentColor" />
            <circle cx="30" cy="29" r="14" fill="none" stroke="#fff" strokeWidth="5" />
          </svg>
        </button>
      </div>
      <button aria-label="Record voice message" className="flex h-[141px] w-[141px] shrink-0 items-center justify-center rounded-full bg-[#00897b] text-white shadow-[0_3px_6px_rgba(0,0,0,0.25)]">
        <svg width="44" height="61" viewBox="0 0 44 61" fill="none" stroke="currentColor">
          <rect x="13" y="0" width="18" height="36" rx="9" fill="currentColor" stroke="none" />
          <path d="M2.500 28 V30 C2.500 40 11 46 22 46 C33 46 41.500 40 41.500 30 V28" strokeWidth="5" />
          <path d="M22 46 V61" strokeWidth="6" />
        </svg>
      </button>
    </footer>
  );
}

export default function App() {
  return (
    <div className="relative flex h-screen flex-col overflow-hidden bg-[linear-gradient(to_bottom,#e9e9e4_0%,#edeae4_22%,#eee6dd_35%,#eee6dd_100%)] font-['Roboto',sans-serif]">
      <Wallpaper />
      <AppBar />
      <Messages />
      <Composer />
    </div>
  );
}
